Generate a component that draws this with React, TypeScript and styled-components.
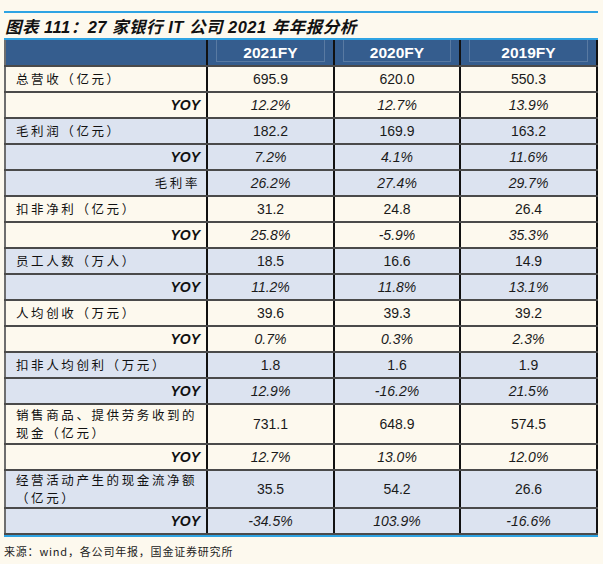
import React from 'react'
import styled, { createGlobalStyle } from 'styled-components'

type Row = {
  label: string
  values: string[]
  kind: 'main' | 'yoy' | 'sub'
  tone: 'cream' | 'blue'
  height?: number
}

const rows: Row[] = [
  { label: '总营收（亿元）', values: ['695.9', '620.0', '550.3'], kind: 'main', tone: 'cream' },
  { label: 'YOY', values: ['12.2%', '12.7%', '13.9%'], kind: 'yoy', tone: 'cream' },
  { label: '毛利润（亿元）', values: ['182.2', '169.9', '163.2'], kind: 'main', tone: 'blue' },
  { label: 'YOY', values: ['7.2%', '4.1%', '11.6%'], kind: 'yoy', tone: 'blue' },
  { label: '毛利率', values: ['26.2%', '27.4%', '29.7%'], kind: 'sub', tone: 'blue' },
  { label: '扣非净利（亿元）', values: ['31.2', '24.8', '26.4'], kind: 'main', tone: 'cream' },
  { label: 'YOY', values: ['25.8%', '-5.9%', '35.3%'], kind: 'yoy', tone: 'cream' },
  { label: '员工人数（万人）', values: ['18.5', '16.6', '14.9'], kind: 'main', tone: 'blue' },
  { label: 'YOY', values: ['11.2%', '11.8%', '13.1%'], kind: 'yoy', tone: 'blue' },
  { label: '人均创收（万元）', values: ['39.6', '39.3', '39.2'], kind: 'main', tone: 'cream' },
  { label: 'YOY', values: ['0.7%', '0.3%', '2.3%'], kind: 'yoy', tone: 'cream' },
  { label: '扣非人均创利（万元）', values: ['1.8', '1.6', '1.9'], kind: 'main', tone: 'blue' },
  { label: 'YOY', values: ['12.9%', '-16.2%', '21.5%'], kind: 'yoy', tone: 'blue' },
  { label: '销售商品、提供劳务收到的现金（亿元）', values: ['731.1', '648.9', '574.5'], kind: 'main', tone: 'cream', height: 40 },
  { label: 'YOY', values: ['12.7%', '13.0%', '12.0%'], kind: 'yoy', tone: 'cream' },
  { label: '经营活动产生的现金流净额（亿元）', values: ['35.5', '54.2', '26.6'], kind: 'main', tone: 'blue', height: 37 },
  { label: 'YOY', values: ['-34.5%', '103.9%', '-16.6%'], kind: 'yoy', tone: 'blue' },
]

const years = ['2021FY', '2020FY', '2019FY']

const GlobalStyle = createGlobalStyle`
  html, body {
    margin: 0;
    background: #fdf9ee;
  }
  body {
    font-family: "Liberation Sans", Arial, "Noto Sans CJK SC", sans-serif;
  }
`

const Page = styled.div`
  width: 603px;
  height: 564px;
  padding: 11px 5px 0 4px;
  box-sizing: border-box;
  background: #fdf9ee;
`

const Title = styled.div`
  height: 25px;
  border-top: 2px solid #2ea3e3;
  border-bottom: 2px solid #2ea3e3;
  display: flex;
  align-items: center;
  padding-left: 1px;
  font-family: "Liberation Sans", "Noto Sans CJK SC", sans-serif;
  font-size: 16.5px;
  font-weight: bold;
  font-style: italic;
  color: #111;
  letter-spacing: 0.5px;
`

const Table = styled.table`
  width: 594px;
  border-collapse: collapse;
  table-layout: fixed;
  border-left: 2px solid #6e6e6e;
  border-right: 2px solid #111;
  border-bottom: 2px solid #4a4a4a;
`

const HeadCell = styled.th`
  position: relative;
  height: 25px;
  padding: 0;
  background: #355d8e;
  color: #fff;
  font-size: 15.5px;
  font-weight: bold;
  text-align: center;
  border-left: 2px solid #111;
  border-bottom: 2px solid #4a4a4a;
  &:first-child {
    border-left: none;
  }
  &::after {
    content: '';
    position: absolute;
    left: 8px;
    right: 8px;
    top: 0;
    bottom: 3px;
    border-left: 1px solid rgba(255, 255, 255, 0.18);
    border-right: 1px solid rgba(255, 255, 255, 0.18);
    border-bottom: 1px solid rgba(255, 255, 255, 0.18);
  }
  &:first-child::after {
    display: none;
  }
`

const BodyRow = styled.tr<{ $tone: 'cream' | 'blue'; $h?: number }>`
  height: ${p => (p.$h ? p.$h : 26)}px;
  background: ${p => (p.$tone === 'cream' ? '#fdf9ee' : '#dce3f0')};
`

const LabelCell = styled.td<{ $kind: 'main' | 'yoy' | 'sub' }>`
  padding: ${p => (p.$kind === 'main' ? '0 2px 0 10px' : '0 6px 0 0')};
  border-bottom: 2px solid #4a4a4a;
  text-align: ${p => (p.$kind === 'main' ? 'left' : 'right')};
  color: #111;
  font-family: ${p =>
    p.$kind === 'yoy'
      ? '"Liberation Sans", Arial, sans-serif'
      : '"Noto Sans CJK SC", sans-serif'};
  font-size: ${p => (p.$kind === 'yoy' ? '14px' : '12.5px')};
  font-weight: ${p => (p.$kind === 'yoy' ? 'bold' : 'normal')};
  font-style: ${p => (p.$kind === 'yoy' ? 'italic' : 'normal')};
  letter-spacing: ${p => (p.$kind === 'yoy' ? '0' : '2.6px')};
  line-height: 18px;
`

const ValueCell = styled.td<{ $italic: boolean }>`
  padding: 0;
  border-left: 2px solid #111;
  border-bottom: 2px solid #4a4a4a;
  text-align: center;
  color: #1a1a1a;
  font-size: 14px;
  font-style: ${p => (p.$italic ? 'italic' : 'normal')};
`

const Source = styled.div`
  margin-top: 0;
  border-top: 2px solid #2ea3e3;
  padding-top: 6px;
  font-family: "Noto Sans CJK SC", sans-serif;
  font-size: 11px;
  letter-spacing: 0.8px;
  color: #222;
`

const App = () => {
  return (
    <>
      <GlobalStyle />
      <Page>
        <Title>图表 111：27 家银行 IT 公司 2021 年年报分析</Title>
        <Table>
          <colgroup>
            <col style={{ width: 202 }} />
            <col style={{ width: 127 }} />
            <col style={{ width: 126 }} />
            <col style={{ width: 137 }} />
          </colgroup>
          <thead>
            <tr>
              <HeadCell />
              {years.map(y => (
                <HeadCell key={y}>{y}</HeadCell>
              ))}
            </tr>
          </thead>
          <tbody>
            {rows.map((r, i) => (
              <BodyRow key={i} $tone={r.tone} $h={r.height}>
                <LabelCell $kind={r.kind}>{r.label}</LabelCell>
                {r.values.map((v, j) => (
                  <ValueCell key={j} $italic={r.kind !== 'main'}>
                    {v}
                  </ValueCell>
                ))}
              </BodyRow>
            ))}
          </tbody>
        </Table>
        <Source>来源：wind，各公司年报，国金证券研究所</Source>
      </Page>
    </>
  )
}

export default App
